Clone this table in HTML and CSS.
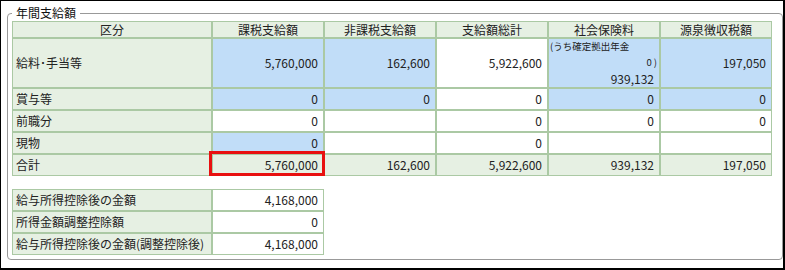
FILE: index.html
```html
<!DOCTYPE html>
<html lang="ja">
<head>
<meta charset="utf-8">
<link rel="stylesheet" href="styles.css">
</head>
<body>
<div class="frame">
  <fieldset class="group">
    <legend class="group-title">年間支給額</legend>
    <table class="grid main">
      <colgroup>
        <col class="c-label"><col class="c-num"><col class="c-num"><col class="c-num"><col class="c-num"><col class="c-num">
      </colgroup>
      <thead>
        <tr class="head">
          <th>区分</th><th>課税支給額</th><th>非課税支給額</th><th>支給額総計</th><th>社会保険料</th><th>源泉徴収税額</th>
        </tr>
      </thead>
      <tbody>
        <tr class="tall">
          <td class="label">給料･手当等</td>
          <td class="num blue">5,760,000</td>
          <td class="num blue">162,600</td>
          <td class="num">5,922,600</td>
          <td class="multi blue">
            <div class="note">(うち確定拠出年金</div>
            <div class="note-val">0 )</div>
            <div class="multi-val">939,132</div>
          </td>
          <td class="num blue">197,050</td>
        </tr>
        <tr>
          <td class="label">賞与等</td>
          <td class="num blue">0</td>
          <td class="num blue">0</td>
          <td class="num">0</td>
          <td class="num blue">0</td>
          <td class="num blue">0</td>
        </tr>
        <tr>
          <td class="label">前職分</td>
          <td class="num">0</td>
          <td class="num"></td>
          <td class="num">0</td>
          <td class="num">0</td>
          <td class="num">0</td>
        </tr>
        <tr>
          <td class="label">現物</td>
          <td class="num blue">0</td>
          <td class="num"></td>
          <td class="num">0</td>
          <td class="num"></td>
          <td class="num"></td>
        </tr>
        <tr class="total">
          <td class="label">合計</td>
          <td class="num marked">5,760,000</td>
          <td class="num">162,600</td>
          <td class="num">5,922,600</td>
          <td class="num">939,132</td>
          <td class="num">197,050</td>
        </tr>
      </tbody>
    </table>
    <table class="grid sub">
      <colgroup>
        <col class="c-label"><col class="c-num">
      </colgroup>
      <tbody>
        <tr>
          <td class="label">給与所得控除後の金額</td>
          <td class="num">4,168,000</td>
        </tr>
        <tr>
          <td class="label">所得金額調整控除額</td>
          <td class="num">0</td>
        </tr>
        <tr>
          <td class="label">給与所得控除後の金額(調整控除後)</td>
          <td class="num">4,168,000</td>
        </tr>
      </tbody>
    </table>
  </fieldset>
</div>
</body>
</html>
```

FILE: styles.css
```css
* { box-sizing: border-box; }
html, body { margin: 0; padding: 0; background: #fff; }
body {
  font-family: "Noto Sans CJK JP", "Noto Sans", sans-serif;
  font-size: 12px;
  color: #222;
}
.frame {
  width: 785px;
  height: 270px;
  border-style: solid;
  border-color: #000;
  border-width: 1px 2px 2px 1px;
  padding: 0 0 0 6px;
  background: #fff;
}
.group {
  margin: 4px 0 0 0;
  width: 776px;
  height: 255px;
  border: 1px solid #999;
  border-radius: 4px;
  padding: 0 4px 4px 4px;
  min-width: 0;
}
.group-title {
  padding: 0 4px;
  margin: 0;
  font-size: 12px;
  line-height: 16px;
  color: #111;
}
.grid {
  border-collapse: separate;
  border-spacing: 0;
  table-layout: fixed;
}
.main { width: 760px; }
.sub { width: 312px; margin-top: 13px; }
.c-label { width: 200px; }
.c-num { width: 112px; }
.grid th, .grid td {
  border: 1px solid #abc9a4;
  padding: 0;
  font-weight: normal;
  white-space: nowrap;
  overflow: visible;
}
.head th {
  background: #e6f0e3;
  height: 17px;
  line-height: 15px;
  text-align: center;
  color: #222;
}
.grid td {
  height: 22px;
  line-height: 20px;
  background: #fff;
}
.grid td.label {
  background: #e6f0e3;
  padding-left: 3px;
  text-align: left;
}
.grid td.num {
  text-align: right;
  padding-right: 5px;
}
.grid td.blue { background: #c1ddf8; }
.tall td { height: 50px; }
.total td { background: #e6f0e3; }
.grid td.multi { vertical-align: top; line-height: normal; }
.note {
  font-size: 9.5px;
  line-height: 14px;
  padding-left: 1px;
}
.note-val {
  font-size: 9.5px;
  line-height: 18px;
  text-align: right;
  padding-right: 2px;
}
.multi-val {
  line-height: 16px;
  text-align: right;
  padding-right: 5px;
}
.marked { position: relative; }
.marked::after {
  content: "";
  position: absolute;
  left: -4px;
  right: -2px;
  top: -4px;
  bottom: -1px;
  border: 3px solid #e81010;
}
```
